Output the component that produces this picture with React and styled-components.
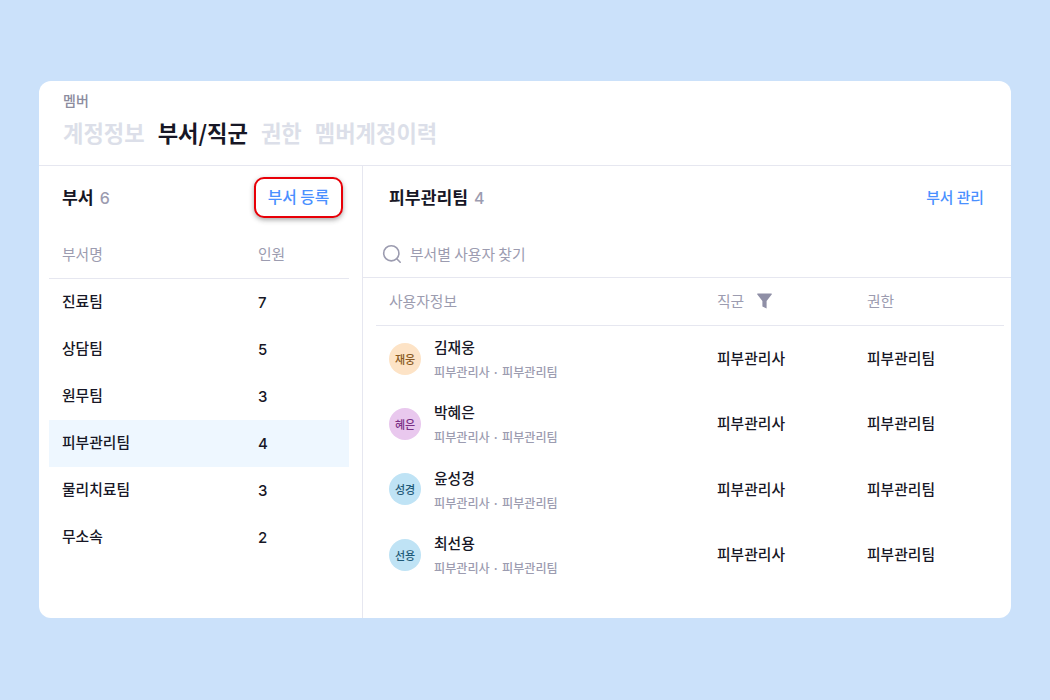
import React from "react";
import styled, { createGlobalStyle } from "styled-components";

const Global = createGlobalStyle`
  html, body { margin: 0; padding: 0; background: #cbe1fa; }
  body { font-family: "Noto Sans CJK KR", "Noto Sans", sans-serif; color: #171726; }
  * { box-sizing: border-box; }
`;

const Page = styled.div`
  width: 1050px;
  height: 700px;
  padding: 81px 39px 82px;
  background: #cbe1fa;
`;
const Card = styled.div`
  height: 537px;
  background: #fff;
  border-radius: 12px;
  overflow: hidden;
  display: flex;
  flex-direction: column;
`;
const Header = styled.header`
  height: 85px;
  padding: 9px 24px 0;
  border-bottom: 1px solid #e6e7f0;
  flex: none;
`;
const Crumb = styled.div`
  font-size: 14px;
  line-height: 20px;
  font-weight: 500;
  color: #8c8c9e;
`;
const Tabs = styled.nav`
  display: flex;
  gap: 13px;
  margin-top: 6px;
`;
const Tab = styled.span`
  font-size: 22.2px;
  line-height: 32px;
  font-weight: 700;
  color: ${p => (p.$active ? "#171726" : "#dcdfe9")};
`;
const Body = styled.div`
  flex: 1;
  display: flex;
  min-height: 0;
`;
const Left = styled.section`
  width: 324px;
  flex: none;
  border-right: 1px solid #e6e7f0;
  padding: 0 13px 0 10px;
`;
const Right = styled.section`
  flex: 1;
  min-width: 0;
`;
const LeftTop = styled.div`
  height: 66px;
  padding: 0 6px 4px 13px;
  display: flex;
  align-items: center;
  justify-content: space-between;
`;
const Title = styled.h2`
  margin: 0;
  font-size: 17.2px;
  line-height: 24px;
  font-weight: 700;
  color: #171726;
`;
const Count = styled.span`
  font-family: Inter, sans-serif;
  font-size: 16px;
  font-weight: 500;
  color: #9c9cb0;
  margin-left: 6px;
`;
const RegisterButton = styled.button`
  width: 89px;
  height: 41px;
  padding: 0;
  background: #fff;
  border: 2px solid #e80008;
  border-radius: 10px;
  box-shadow: 0 2px 5px rgba(60, 60, 60, 0.45);
  font: 500 15.8px/20px "Noto Sans CJK KR", sans-serif;
  color: #4a90ff;
`;
const DeptHead = styled.div`
  height: 47px;
  padding: 0 13px 4px;
  display: grid;
  grid-template-columns: 196px 1fr;
  align-items: center;
  border-bottom: 1px solid #e6e7f0;
  font-size: 14.8px;
  color: #9c9cb0;
`;
const DeptRow = styled.div`
  height: 47px;
  padding: 0 13px;
  display: grid;
  grid-template-columns: 196px 1fr;
  align-items: center;
  background: ${p => (p.$selected ? "#eef7ff" : "transparent")};
  font-size: 14.8px;
  font-weight: 500;
  color: #171726;
`;
const DeptName = styled.span`
  margin-top: -4px;
`;
const DeptNum = styled.span`
  font-family: Inter, sans-serif;
  font-size: 15px;
  margin-top: -1px;
`;
const RightTop = styled.div`
  height: 66px;
  padding: 0 27px 4px 26px;
  display: flex;
  align-items: center;
  justify-content: space-between;
`;
const Manage = styled.a`
  font-size: 14.8px;
  line-height: 20px;
  font-weight: 500;
  color: #4a90ff;
`;
const Search = styled.div`
  height: 46px;
  padding: 0 0 2px 19px;
  display: flex;
  align-items: center;
  gap: 8px;
  border-bottom: 1px solid #e6e7f0;
  font-size: 14.8px;
  color: #9c9cb0;
`;
const Table = styled.div`
  padding: 0 7px 0 13px;
`;
const UserHead = styled.div`
  height: 48px;
  padding: 0 0 2px 13px;
  display: grid;
  grid-template-columns: 328px 150px 1fr;
  align-items: center;
  border-bottom: 1px solid #e6e7f0;
  font-size: 14.8px;
  color: #9c9cb0;
`;
const HeadCell = styled.span`
  display: flex;
  align-items: center;
  gap: 13px;
`;
const UserRow = styled.div`
  height: 65.33px;
  padding: 0 0 0 13px;
  display: grid;
  grid-template-columns: 328px 150px 1fr;
  align-items: center;
  font-size: 14.8px;
  font-weight: 500;
  color: #171726;
`;
const Cell = styled.span`
  margin-top: -2px;
`;
const UserInfo = styled.div`
  display: flex;
  align-items: center;
  gap: 13px;
`;
const Avatar = styled.div`
  width: 32px;
  height: 32px;
  border-radius: 50%;
  display: flex;
  align-items: center;
  justify-content: center;
  font-size: 11px;
  font-weight: 500;
  background: ${p => p.$bg};
  color: ${p => p.$fg};
`;
const Names = styled.div`
  display: flex;
  flex-direction: column;
  margin-top: 0;
`;
const Name = styled.div`
  font-size: 14.8px;
  line-height: 22px;
  font-weight: 500;
  color: #171726;
`;
const Sub = styled.div`
  font-size: 12.1px;
  line-height: 18px;
  margin-top: 5px;
  color: #9c9cb0;
`;

const depts = [
  ["진료팀", 7], ["상담팀", 5], ["원무팀", 3],
  ["피부관리팀", 4], ["물리치료팀", 3], ["무소속", 2],
];
const users = [
  ["김재웅", "재웅", "#fde3c6", "#8a5a22"],
  ["박혜은", "혜은", "#e9c8ee", "#7a2f86"],
  ["윤성경", "성경", "#bfe3f5", "#1f5a78"],
  ["최선용", "선용", "#bfe3f5", "#1f5a78"],
];

export default function App() {
  return (
    <Page>
      <Global />
      <Card>
        <Header>
          <Crumb>멤버</Crumb>
          <Tabs>
            <Tab>계정정보</Tab>
            <Tab $active>부서/직군</Tab>
            <Tab>권한</Tab>
            <Tab>멤버계정이력</Tab>
          </Tabs>
        </Header>
        <Body>
          <Left>
            <LeftTop>
              <Title>부서<Count>6</Count></Title>
              <RegisterButton>부서 등록</RegisterButton>
            </LeftTop>
            <DeptHead><span>부서명</span><span>인원</span></DeptHead>
            {depts.map(([n, c]) => (
              <DeptRow key={n} $selected={n === "피부관리팀"}>
                <DeptName>{n}</DeptName>
                <DeptNum>{c}</DeptNum>
              </DeptRow>
            ))}
          </Left>
          <Right>
            <RightTop>
              <Title>피부관리팀<Count>4</Count></Title>
              <Manage>부서 관리</Manage>
            </RightTop>
            <Search>
              <svg width="20" height="20" viewBox="0 0 20 20" fill="none" stroke="#9c9cb0" strokeWidth="1.6" strokeLinecap="round">
                <circle cx="9.3" cy="9.3" r="7.6" />
                <path d="M15 15l3.2 3.2" />
              </svg>
              부서별 사용자 찾기
            </Search>
            <Table>
              <UserHead>
                <span>사용자정보</span>
                <HeadCell>
                  직군
                  <svg width="15" height="16" viewBox="0 0 15 16" fill="#8f8fa6">
                    <path d="M0.8 0.5h13.4a.6.6 0 0 1 .5 1L9.6 8v7.5L5.4 13.4V8L.3 1.5a.6.6 0 0 1 .5-1z" />
                  </svg>
                </HeadCell>
                <span>권한</span>
              </UserHead>
              {users.map(([n, a, bg, fg]) => (
                <UserRow key={n}>
                  <UserInfo>
                    <Avatar $bg={bg} $fg={fg}>{a}</Avatar>
                    <Names>
                      <Name>{n}</Name>
                      <Sub>피부관리사 · 피부관리팀</Sub>
                    </Names>
                  </UserInfo>
                  <Cell>피부관리사</Cell>
                  <Cell>피부관리팀</Cell>
                </UserRow>
              ))}
            </Table>
          </Right>
        </Body>
      </Card>
    </Page>
  );
}
